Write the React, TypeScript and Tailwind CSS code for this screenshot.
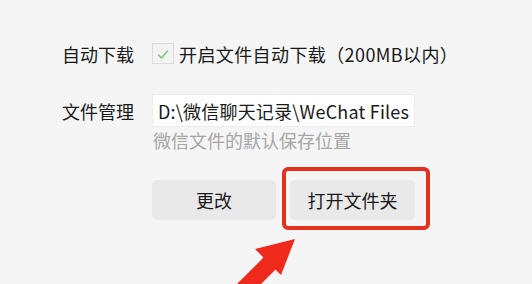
import React from 'react';

const font = { fontFamily: '"Microsoft YaHei", "Noto Sans CJK SC", "Noto Sans", sans-serif' };

function CheckBox() {
  return (
    <div className="w-[22px] h-[21px] border border-[#dcdcdc] bg-[#f3f3f3] flex items-center justify-center">
      <svg width="14" height="14" viewBox="0 0 14 14" fill="none">
        <path d="M2 7.5 L5.5 11 L12 3.5" stroke="#74c27a" strokeWidth="1.4" />
      </svg>
    </div>
  );
}

export default function App() {
  return (
    <div
      className="relative w-[532px] h-[284px] overflow-hidden bg-[#f5f5f5] pl-[62px] pt-[43px] text-[18px] text-[#191919]"
      style={font}
    >
      <div className="flex items-center h-[21px]">
        <div className="w-[90px] leading-none">自动下载</div>
        <CheckBox />
        <div className="ml-[5px] leading-none tracking-[0.4px]">开启文件自动下载（200MB以内）</div>
      </div>

      <div className="flex items-center mt-[30px]">
        <div className="w-[90px] leading-none">文件管理</div>
        <div className="w-[263px] h-[33px] bg-white border border-[#ececec] flex items-center pl-[5px] overflow-hidden whitespace-nowrap leading-none tracking-[0.2px]">
          D:\微信聊天记录\WeChat Files
        </div>
      </div>

      <div className="ml-[91px] mt-[2px] text-[#a6a6a6] leading-[22px]">微信文件的默认保存位置</div>

      <div className="flex ml-[90px] mt-[29px] gap-[14px]">
        <button className="w-[124px] h-[40px] rounded-[5px] bg-[#e9e9e9] text-[18px] text-[#191919]">更改</button>
        <div className="relative">
          <button className="w-[125px] h-[40px] rounded-[5px] bg-[#e9e9e9] text-[18px] text-[#191919]">打开文件夹</button>
          <div className="absolute left-[-8px] top-[-13px] right-[-15px] bottom-[-10px] border-[4px] border-[#e4311f] rounded-[6px]" />
        </div>
      </div>

      <svg className="absolute left-0 top-0" width="532" height="284" viewBox="0 0 532 284">
        <polygon
          points="295,239 255,249 263.5,257.5 221,300 245,300 275.5,269.5 281,275"
          fill="#ef2a1c"
        />
      </svg>
    </div>
  );
}
